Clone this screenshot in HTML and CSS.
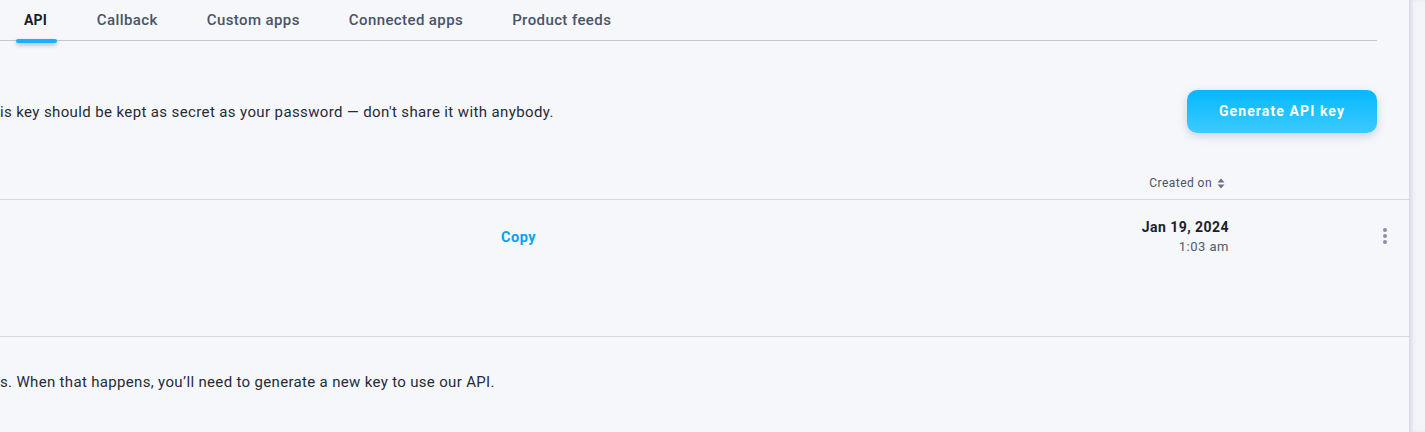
FILE: index.html
```html
<!DOCTYPE html>
<html>
<head>
<meta charset="utf-8">
<link rel="stylesheet" href="styles.css">
</head>
<body>
<div class="page">
  <main class="main">
    <nav class="tabs">
      <a class="tab active">API</a>
      <a class="tab">Callback</a>
      <a class="tab">Custom apps</a>
      <a class="tab">Connected apps</a>
      <a class="tab">Product feeds</a>
    </nav>
    <section class="intro">
      <p class="intro-text">is key should be kept as secret as your password — don't share it with anybody.</p>
      <button class="btn-primary">Generate API key</button>
    </section>
    <div class="table">
      <div class="thead">
        <div class="th-key"></div>
        <div class="th-date">Created on
          <svg class="sort" width="8" height="11" viewBox="0 0 8 11"><path d="M4 0.5 L7.5 4.5 H0.5 Z M4 10.5 L0.5 6.5 H7.5 Z" fill="#6b7280"/></svg>
        </div>
        <div class="th-menu"></div>
      </div>
      <div class="row">
        <div class="cell-key"><a class="copy">Copy</a></div>
        <div class="cell-date">
          <div class="date">Jan 19, 2024</div>
          <div class="time">1:03 am</div>
        </div>
        <div class="cell-menu">
          <svg width="6" height="18" viewBox="0 0 6 18"><circle cx="3" cy="3" r="2" fill="#8592a6"/><circle cx="3" cy="9" r="2" fill="#8592a6"/><circle cx="3" cy="15" r="2" fill="#8592a6"/></svg>
        </div>
      </div>
    </div>
    <p class="note">s. When that happens, you’ll need to generate a new key to use our API.</p>
  </main>
  <div class="scroll-strip"></div>
</div>
</body>
</html>
```
FILE: styles.css
```css
html, body {
  margin: 0;
  padding: 0;
}
body {
  background: #f5f7fb;
  font-family: "Source Sans Pro", Roboto, "Liberation Sans", sans-serif;
  color: #262b36;
  overflow: hidden;
  width: 1425px;
  height: 432px;
}
.page {
  display: flex;
  height: 432px;
}
.main {
  width: 1409px;
  flex: none;
}
.scroll-strip {
  flex: 1;
  background: #f3f5f9;
  box-shadow: inset 4px 0 5px -2px rgba(160, 170, 190, 0.45);
}
.tabs {
  display: flex;
  width: 1377px;
  height: 41px;
  border-bottom: 1px solid #c8c9cc;
  box-sizing: border-box;
}
.tab {
  position: relative;
  font-size: 15px;
  font-weight: 500;
  color: #4a5468;
  line-height: 40px;
  margin-right: 49px;
  letter-spacing: 0.4px;
}
.tab:first-child {
  margin-left: 24px;
  margin-right: 50px;
  font-size: 14px;
  letter-spacing: 0.1px;
}
.tab.active {
  color: #1a1f2b;
  font-weight: 700;
}
.tab.active::after {
  content: "";
  position: absolute;
  left: -8px;
  right: -10px;
  bottom: -3px;
  height: 4px;
  border-radius: 2px;
  background: #14b4fb;
  box-shadow: 0 2px 4px rgba(40, 60, 90, 0.35);
}
.intro {
  display: flex;
  align-items: center;
  justify-content: space-between;
  padding: 48px 32px 0 0;
  height: 44px;
}
.intro-text {
  margin: 0;
  padding-top: 1px;
  font-size: 15px;
  letter-spacing: 0.38px;
  color: #262b36;
}
.btn-primary {
  width: 190px;
  height: 43px;
  border: none;
  border-radius: 10px;
  background: linear-gradient(180deg, #04b8fc 0%, #3ccbff 100%);
  color: #ffffff;
  font-family: inherit;
  font-size: 14px;
  font-weight: 700;
  letter-spacing: 1.1px;
  box-shadow: 0 3px 8px rgba(120, 140, 170, 0.35);
}
.thead {
  display: flex;
  align-items: center;
  height: 34px;
  margin-top: 32px;
  border-bottom: 1px solid #d6d8dc;
}
.th-key { flex: 1; }
.th-date {
  width: 120px;
  margin-right: 140px;
  font-size: 12px;
  letter-spacing: 0.45px;
  color: #4a5468;
  padding-top: 2px;
  padding-right: 4px;
  box-sizing: border-box;
  display: flex;
  align-items: center;
  justify-content: flex-end;
  gap: 5px;
}
.th-menu { width: 40px; }
.row {
  display: flex;
  height: 136px;
  border-bottom: 1px solid #d6d8dc;
}
.cell-key {
  flex: 1;
  padding-top: 27px;
  padding-left: 501px;
}
.copy {
  font-size: 14.5px;
  font-weight: 700;
  color: #0aa2f2;
  letter-spacing: 0.5px;
}
.cell-date {
  width: 120px;
  margin-right: 140px;
  text-align: right;
  padding-top: 18px;
}
.date {
  font-size: 14px;
  font-weight: 700;
  color: #1a1f2b;
  letter-spacing: 0.45px;
  line-height: 18px;
}
.time {
  font-size: 13px;
  font-weight: 400;
  color: #4f5a70;
  margin-top: 3px;
  letter-spacing: 0.5px;
}
.cell-menu {
  width: 27px;
  padding-left: 13px;
  padding-top: 27px;
}
.note {
  margin: 36px 0 0 0;
  font-size: 15px;
  letter-spacing: 0.33px;
  color: #262b36;
}
```
